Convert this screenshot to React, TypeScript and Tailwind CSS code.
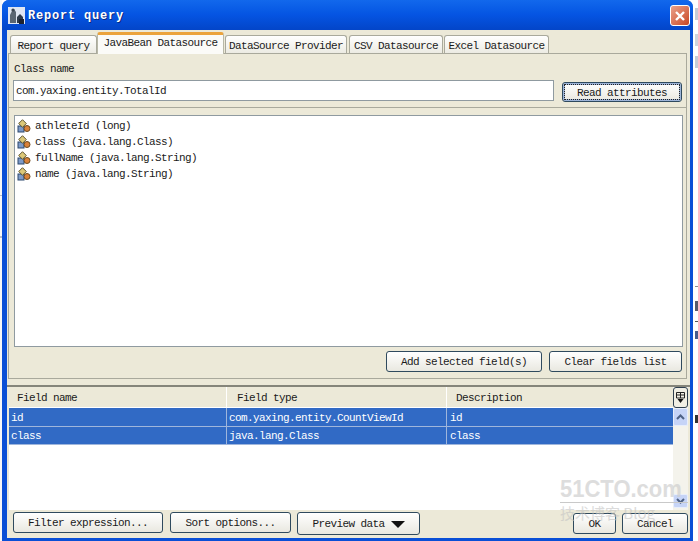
const mono = "font-['Liberation_Mono','DejaVu_Sans_Mono',monospace] text-[11px] tracking-[-0.6px] text-[#1a1a1a] whitespace-pre";

function Btn({ w, h = "h-[21px]", children, focus = false }: { w: string; h?: string; children: React.ReactNode; focus?: boolean }) {
  return (
    <div className={`${w} ${h} shrink-0 flex items-center justify-center pt-[2px] rounded-[3px] border border-[#2f4a5e] bg-gradient-to-b from-white to-[#e9e8e0] ${mono} ${focus ? "outline-1 outline-dotted -outline-offset-3 outline-[#222] shadow-[inset_0_0_0_2px_#9db4d8]" : ""}`}>
      {children}
    </div>
  );
}

function Tab({ w, active = false, children }: { w: string; active?: boolean; children: React.ReactNode }) {
  return active ? (
    <div className={`${w} h-[22px] shrink-0 flex items-center justify-center bg-[#fbfbf8] border-x border-[#b8b8a8] border-t-[3px] border-t-[#eba33c] rounded-t-[3px] -mb-px pb-[3px] ${mono}`}>
      {children}
    </div>
  ) : (
    <div className={`${w} h-[18px] shrink-0 flex items-center justify-center pt-[3px] bg-gradient-to-b from-white to-[#ecebe3] border-x border-t border-[#a9a99c] rounded-t-[3px] ${mono}`}>
      {children}
    </div>
  );
}

function BeanIcon() {
  return (
    <svg width="14" height="14" viewBox="0 0 14 14" className="shrink-0">
      <rect x="1" y="7" width="6" height="6" fill="#7d9ac8" stroke="#2f4a6e" strokeWidth="1" />
      <circle cx="10" cy="9.5" r="3" fill="#d9813a" stroke="#6b4a1e" strokeWidth="1" />
      <path d="M5.5 0.7 L9.3 4.5 L5.5 8.3 L1.7 4.5 Z" fill="#dcc878" stroke="#5f5530" strokeWidth="1" />
    </svg>
  );
}

function Attr({ name, type }: { name: string; type: string }) {
  return (
    <div className="h-4 flex items-center gap-[4px]">
      <BeanIcon />
      <span className={`${mono} pt-px`}>{name} ({type})</span>
    </div>
  );
}

function Row({ a, b, c, h }: { a: string; b: string; c: string; h: string }) {
  const cell = `${mono} !text-white px-[2px] pt-[2px] flex items-center border-r border-[#9fb6dc]`;
  return (
    <div className={`${h} flex bg-[#316ac5] border-b border-[#9fb6dc]`}>
      <div className={`${cell} w-[218px]`}>{a}</div>
      <div className={`${cell} w-[220px]`}>{b}</div>
      <div className={`${mono} !text-white pl-[3px] pt-[2px] flex items-center flex-1`}>{c}</div>
    </div>
  );
}

export default function App() {
  return (
    <div className="w-[698px] h-[541px] overflow-hidden flex bg-white relative">
      <div className="w-[2px] flex flex-col bg-[#f7f7f7]">
        <div className="h-[195px]" />
        <div className="h-px bg-[#b8bcc8]" />
        <div className="h-[40px]" />
        <div className="h-[2px] bg-[#b8bcc8]" />
      </div>
      <div className="w-[691px] h-[541px] flex flex-col bg-[#0a4fd6] rounded-t-[7px] pl-[5px] pr-[3px] pb-[3px]">
        {/* Title bar */}
        <div className="h-[30px] shrink-0 -ml-[5px] -mr-[3px] pl-[6px] pr-[3px] pt-px flex items-center rounded-t-[7px] bg-gradient-to-b from-[#1268ec] via-[#0554e2] to-[#0345c8]">
          <svg width="17" height="17" viewBox="0 0 17 17" className="shrink-0">
            <rect width="17" height="17" fill="#dfe6f2" />
            <path d="M2 16 V8 L4 4 L6 2 L8 5 L8 16 Z" fill="#5a6672" />
            <circle cx="5" cy="3" r="1.6" fill="#3a4450" />
            <path d="M9 16 V10 L12 7 L15 10 V16 Z" fill="#2e3a48" />
            <rect x="11" y="12" width="5" height="5" fill="#1c2230" />
          </svg>
          <span className="ml-[3px] font-['Liberation_Mono',monospace] text-[12px] font-bold text-white tracking-[0.8px] whitespace-pre [text-shadow:1px_1px_0_#0a2a80]">Report query</span>
          <div className="ml-auto w-[20px] h-[21px] rounded-[3px] border border-white bg-gradient-to-br from-[#e9a08a] to-[#c8451f] flex items-center justify-center">
            <svg width="12" height="12" viewBox="0 0 12 12"><path d="M2 2 L10 10 M10 2 L2 10" stroke="#fff" strokeWidth="2.4" /></svg>
          </div>
        </div>

        {/* Client */}
        <div className="flex-1 min-h-0 flex flex-col bg-[#ece9d8]">
          {/* Tabs */}
          <div className="h-[23px] shrink-0 pl-[3px] flex items-end relative z-10">
            <Tab w="w-[87px]">Report query</Tab>
            <Tab w="w-[127px]" active>JavaBean Datasource</Tab>
            <div className="w-px shrink-0" />
            <Tab w="w-[122px]">DataSource Provider</Tab>
            <div className="w-[2px] shrink-0" />
            <Tab w="w-[94px]">CSV Datasource</Tab>
            <div className="w-px shrink-0" />
            <Tab w="w-[105px]">Excel Datasource</Tab>
          </div>
          {/* Tab panel */}
          <div className="h-[326px] shrink-0 ml-px mr-[3px] border border-[#a9a99c] bg-[#ece9d8] flex flex-col">
            <div className="h-[54px] shrink-0 border-b border-[#a9a99c] pl-[4px] pr-[4px] pt-[7px]">
              <div className={`${mono} h-[17px] flex items-center pl-px`}>Class name</div>
              <div className="flex items-start gap-[8px] mt-[2px]">
                <div className={`w-[541px] h-[21px] bg-white border border-[#8f9aa0] flex items-center px-[2px] pt-[2px] ${mono}`}>com.yaxing.entity.TotalId</div>
                <Btn w="w-[120px]" h="h-[20px] mt-[2px]" focus>Read attributes</Btn>
              </div>
            </div>
            <div className="h-[232px] shrink-0 mt-[7px] ml-[5px] mr-[3px] bg-white border border-[#8f9aa0] pl-[2px] pt-[2px]">
              <Attr name="athleteId" type="long" />
              <Attr name="class" type="java.lang.Class" />
              <Attr name="fullName" type="java.lang.String" />
              <Attr name="name" type="java.lang.String" />
            </div>
            <div className="flex justify-end gap-[7px] mt-[4px] pr-[4px]">
              <Btn w="w-[156px]">Add selected field(s)</Btn>
              <Btn w="w-[133px]">Clear fields list</Btn>
            </div>
          </div>
          {/* Splitter */}
          <div className="h-[6px] shrink-0" />
          <div className="h-[2px] shrink-0 bg-[#85857a]" />
          {/* Table */}
          <div className="flex-1 min-h-0 flex pl-[2px] pr-[2px]">
            <div className="flex-1 min-w-0 flex flex-col bg-white">
              <div className="h-[21px] shrink-0 flex bg-[#ece9d8] border-b border-white">
                <div className={`${mono} w-[218px] pl-[8px] pt-[2px] flex items-center border-r border-white`}>Field name</div>
                <div className={`${mono} w-[220px] pl-[10px] pt-[2px] flex items-center border-r border-white`}>Field type</div>
                <div className={`${mono} flex-1 pl-[9px] pt-[2px] flex items-center`}>Description</div>
              </div>
              <Row h="h-[19px]" a="id" b="com.yaxing.entity.CountViewId" c="id" />
              <Row h="h-[18px]" a="class" b="java.lang.Class" c="class" />
              <div className="flex-1 bg-white" />
            </div>
            <div className="w-[15px] shrink-0 flex flex-col bg-[#f4f3ec]">
              <div className="h-[21px] shrink-0 rounded-[3px] border border-[#30404f] bg-[#f1efe4] flex items-center justify-center">
                <svg width="11" height="13" viewBox="0 0 11 13"><path d="M1.5 1.5 H9.5 V7 H1.5 Z M1.5 4 H9.5 M5.5 1.5 V7" fill="none" stroke="#222" /><path d="M2.5 8 H8.5 L5.5 12 Z" fill="#111" /></svg>
              </div>
              <div className="h-[18px] shrink-0 rounded-[2px] bg-[#c6d4f7] border border-[#e8eefb] flex items-center justify-center">
                <svg width="9" height="6" viewBox="0 0 9 6"><path d="M1 5 L4.5 1.5 L8 5" fill="none" stroke="#4d6185" strokeWidth="2" /></svg>
              </div>
              <div className="flex-1" />
              <div className="h-[14px] shrink-0 rounded-[2px] bg-[#c6d4f7] border border-[#e8eefb] flex items-center justify-center mb-[2px]">
                <svg width="9" height="6" viewBox="0 0 9 6"><path d="M1 1 L4.5 4.5 L8 1" fill="none" stroke="#4d6185" strokeWidth="2" /></svg>
              </div>
            </div>
          </div>
          {/* Bottom buttons */}
          <div className="h-[28px] shrink-0 flex items-start pt-[2px] pl-[6px] pr-[2px]">
            <Btn w="w-[150px]">Filter expression...</Btn>
            <div className="w-[7px]" />
            <Btn w="w-[121px]">Sort options...</Btn>
            <div className="w-[6px]" />
            <Btn w="w-[123px]" h="h-[23px]">
              <span className="flex items-center gap-[6px]">Preview data
                <svg width="14" height="7" viewBox="0 0 14 7"><path d="M0 0 H14 L7 7 Z" fill="#111" /></svg>
              </span>
            </Btn>
            <div className="ml-auto mt-px flex gap-[6px]">
              <Btn w="w-[43px]">OK</Btn>
              <Btn w="w-[66px]">Cancel</Btn>
            </div>
          </div>
        </div>
      </div>
      {/* Page behind the dialog, right side */}
      <div className="w-[5px] flex flex-col bg-white pl-[2px]">
        <div className="h-[8px]" />
        <div className="h-[12px] bg-[#c9ccd6]" />
        <div className="h-[14px]" />
        <div className="h-[12px] bg-[#d2d4dc]" />
        <div className="h-[10px]" />
        <div className="h-[12px] bg-[#c9ccd6]" />
        <div className="h-[218px]" />
        <div className="h-px bg-[#8a8a8a]" />
        <div className="h-[14px]" />
        <div className="h-[10px] bg-[#5a5a6a]" />
        <div className="h-[10px]" />
        <div className="h-px bg-[#555]" />
        <div className="h-[9px]" />
        <div className="h-[8px] bg-[#4a5a8a]" />
        <div className="h-[76px]" />
        <div className="h-[8px] bg-[#333]" />
      </div>
      {/* Watermark overlay */}
      <div className="absolute left-[560px] top-[475px] w-[128px] pointer-events-none">
        <div className="font-['Liberation_Sans',sans-serif] text-[22px] leading-[26px] font-bold text-[#cfcfcf] opacity-70 whitespace-pre origin-top scale-y-110">51CTO.com</div>
        <div className="mt-[1px] h-px bg-[#c9c9c9]" />
        <div className="font-['Noto_Sans_CJK_SC',sans-serif] text-[15px] leading-[20px] text-[#c4c4c4] opacity-60 whitespace-pre">技术博客 Blog</div>
      </div>
    </div>
  );
}
